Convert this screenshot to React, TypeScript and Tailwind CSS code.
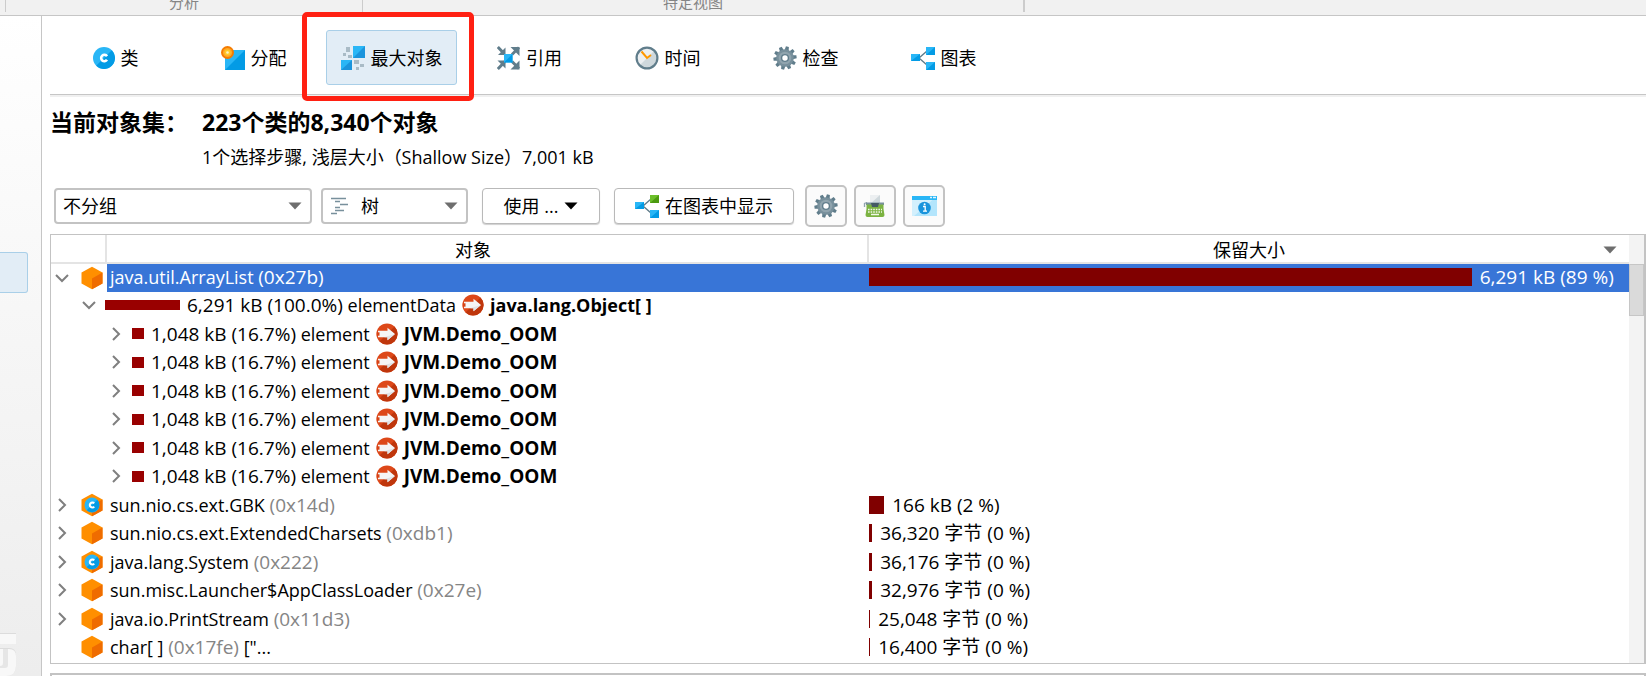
import type { ReactNode } from 'react';

type IconProps = { className?: string };

const ClassIcon = ({ className = 'size-[22px]' }: IconProps) => (
  <svg viewBox="0 0 22 22" className={className} aria-hidden="true">
    <circle cx="11" cy="11" r="11" fill="#29b6f6" />
    <path d="M18.8 3.2A11 11 0 0 1 3.2 18.8Z" fill="#039be5" />
    <path d="M14 9.2A3.2 3.2 0 1 0 14 12.8" fill="none" stroke="#fff" strokeWidth="2.6" />
  </svg>
);

const AllocationIcon = () => (
  <svg viewBox="0 0 24 24" className="size-6" aria-hidden="true">
    <path d="M4 4H24V24H4Z" fill="#29b6f6" />
    <path d="M24 4V24H4Z" fill="#039be5" />
    <circle cx="6.5" cy="6.5" r="6.5" fill="#f57c00" />
    <circle cx="6.5" cy="6.5" r="4.6" fill="#ffa726" />
    <circle cx="6.5" cy="6.5" r="3" fill="#ffca28" />
    <circle cx="6.5" cy="6.5" r="1.3" fill="#fff3c4" />
  </svg>
);

const BiggestIcon = () => (
  <svg viewBox="0 0 24 24" className="size-6" aria-hidden="true">
    <path d="M12 0H24V12H12Z" fill="#29b6f6" />
    <path d="M24 0V12H12Z" fill="#1a94dc" />
    <path d="M0 14H11V24H0Z" fill="#29b6f6" />
    <path d="M11 14V24H0Z" fill="#1a94dc" />
    <g fill="#a9bbc6">
      <path d="M5 1H9V6H5Z" />
      <path d="M2 7H5V10H2Z" />
      <path d="M7 9H11V12H7Z" />
      <path d="M13 14H18V18H13Z" />
      <path d="M19 18H23V21H19Z" />
      <path d="M15 21H18V24H15Z" />
    </g>
  </svg>
);

const ReferenceIcon = () => (
  <svg viewBox="0 0 23 24" className="h-6 w-[23px]" aria-hidden="true">
    <g stroke="#607d8b" strokeWidth="3" fill="none">
      <path d="M.8 1 7 7.500M22 22.500 15 15.500M.8 23 8 15.500M15 8.500 22 1.500" />
    </g>
    <g fill="#607d8b">
      <path d="M8.500 1.500V9H1Z" />
      <path d="M13.500 1H22.500V10Z" />
      <path d="M.5 14.500H8.500V22.500Z" />
      <path d="M22.500 14.500V23.500H13.500Z" />
    </g>
    <path d="M7 8H15.500V16.500H7Z" fill="#29b6f6" />
    <path d="M15.500 8V16.500H7Z" fill="#039be5" />
  </svg>
);

const ClockIcon = () => (
  <svg viewBox="0 0 24 24" className="size-6" aria-hidden="true">
    <circle cx="12" cy="12" r="10.600" fill="#cfd8dc" />
    <path d="M19.500 4.500A10.600 10.600 0 0 0 4.500 19.500Z" fill="#eceff1" />
    <circle cx="12" cy="12" r="10.400" fill="none" stroke="#607d8b" strokeWidth="2.200" />
    <path d="M6.500 5.500 12 12 16 9" fill="none" stroke="#ff9800" strokeWidth="2" />
  </svg>
);

const GearIcon = () => (
  <svg viewBox="-12 -12 24 24" className="size-6" aria-hidden="true">
    <g fill="#607d8b">
      {[0, 36, 72, 108, 144, 180, 216, 252, 288, 324].map((a) => (
        <path key={a} d="M-2.100 -7.500-1.500 -11.600H1.500L2.100 -7.500Z" transform={`rotate(${a + 12})`} />
      ))}
    </g>
    <circle r="8.800" fill="#78909c" />
    <circle r="6.300" fill="#90a4ae" />
    <circle r="3.400" fill="#fff" stroke="#607d8b" strokeWidth="1.400" />
  </svg>
);

const GraphIcon = ({ green = false }: { green?: boolean }) => (
  <svg viewBox="0 0 24 24" className="size-6" aria-hidden="true">
    <path d="M16 5 8 12 16 19" fill="none" stroke="#607d8b" strokeWidth="1.400" />
    <path d="M0 8H9V15H0ZM15 16H24V24H15Z" fill="#29b6f6" />
    <path d="M9 8V15H0ZM24 16V24H15Z" fill="#039be5" />
    <path d="M15 1H24V9H15Z" fill={green ? '#6cbf2a' : '#29b6f6'} />
    <path d="M24 1V9H15Z" fill={green ? '#4c9a10' : '#039be5'} />
  </svg>
);

const TypewriterIcon = () => (
  <svg viewBox="0 0 24 24" className="size-6" aria-hidden="true">
    <path d="M7 1H17V10H7Z" fill="#eceff1" />
    <path d="M17 1V10H7Z" fill="#cfd8dc" />
    <path d="M1.500 13V9.500L4 8.500" fill="none" stroke="#90a4ae" strokeWidth="1.300" />
    <path d="M3 8.500H21V11H3Z" fill="#78909c" />
    <path d="M3.500 10.500H20.500V15L21.500 21Q21.500 23 19.500 23H4.500Q2.500 23 2.500 21L3.500 15Z" fill="#7cb342" />
    <path d="M8 9H16L15 13H9Z" fill="#455a64" />
    <path d="M5 15.500H19M5 18H19" stroke="#f1f8e9" strokeWidth="1.500" strokeDasharray="1.600 1" />
    <path d="M8 20.500H16" stroke="#f1f8e9" strokeWidth="1.500" />
  </svg>
);

const InfoWindowIcon = () => (
  <svg viewBox="0 0 25 22" className="h-[22px] w-[25px]" aria-hidden="true">
    <path d="M0 1H25V21H0Z" fill="#b3e5fc" />
    <path d="M0 1H25L2 21H0Z" fill="#d3f0fd" />
    <path d="M0 1H25V5H0Z" fill="#29b6f6" />
    <path d="M18 2.500H20M21 2.500H24" stroke="#e1f5fe" strokeWidth="1.500" />
    <circle cx="12.500" cy="13" r="6.300" fill="#1a94dc" />
    <path d="M11 11.500H13.200V16M11 16.200H15" fill="none" stroke="#fff" strokeWidth="1.300" />
    <circle cx="12.600" cy="9.300" r="1" fill="#fff" />
  </svg>
);

const TreeListIcon = () => (
  <svg viewBox="0 0 18 18" className="size-[18px]" aria-hidden="true">
    <path d="M0 1.500H15M4 4.500H9M9 7.500H17M4 10.500H9M4 13.500H13M0 16.500H6" stroke="#78909c" strokeWidth="1.400" />
  </svg>
);

const CubeIcon = ({ withClass = false }: { withClass?: boolean }) => (
  <svg viewBox="0 0 22 24" className="h-6 w-[22px] shrink-0" aria-hidden="true">
    <path d="M11 .8 21.500 6.500V17.500L11 23.200.500 17.500V6.500Z" fill="#ff8f00" />
    <path d="M21.500 6.500V17.500L11 23.200V12.500Z" fill="#ef6c00" />
    {withClass && (
      <>
        <circle cx="11" cy="12" r="7.500" fill="#29b6f6" />
        <path d="M16.300 6.700A7.500 7.500 0 0 1 5.700 17.300Z" fill="#039be5" />
        <path d="M13.200 10.400A2.500 2.500 0 1 0 13.200 13.600" fill="none" stroke="#fff" strokeWidth="2" />
      </>
    )}
  </svg>
);

const ArrowIcon = () => (
  <svg viewBox="0 0 22 22" className="size-[22px] shrink-0" aria-hidden="true">
    <circle cx="11" cy="11" r="10.600" fill="#dd4819" />
    <path d="M18.500 3.500A10.600 10.600 0 0 1 3.500 18.500Z" fill="#bf360c" />
    <path d="M2 7.800H11.500V4.800L19 11 11.500 17.200V14.200H2Z" fill="#f5f5f5" />
    <path d="M19 11 11.500 17.200V14.200H8Z" fill="#dfe3e6" />
    <path d="M.8 9.300H3.500V12.700H.8Z" fill="#d84315" />
  </svg>
);

const Chevron = ({ open = false }: { open?: boolean }) => (
  <svg viewBox="0 0 14 14" className="size-[14px] shrink-0" fill="none" stroke="#7f7f7f" strokeWidth="2" aria-hidden="true">
    {open ? <path d="M1 4 7 10 13 4" /> : <path d="M4 1 10 7 4 13" />}
  </svg>
);

const Triangle = ({ className = 'text-[#6e6e6e]' }: IconProps) => (
  <svg viewBox="0 0 14 8" className={`h-2 w-[14px] ${className}`} aria-hidden="true">
    <path d="M.5 .5H13.500L7 7.500Z" fill="currentColor" />
  </svg>
);

const tabs: { label: string; icon: ReactNode; active?: boolean }[] = [
  { label: '类', icon: <ClassIcon /> },
  { label: '分配', icon: <AllocationIcon /> },
  { label: '最大对象', icon: <BiggestIcon />, active: true },
  { label: '引用', icon: <ReferenceIcon /> },
  { label: '时间', icon: <ClockIcon /> },
  { label: '检查', icon: <GearIcon /> },
  { label: '图表', icon: <GraphIcon /> },
];

const objects = [
  { name: 'sun.nio.cs.ext.GBK', id: '(0x14d)', cls: true, size: '166 kB (2 %)', bar: 15 },
  { name: 'sun.nio.cs.ext.ExtendedCharsets', id: '(0xdb1)', size: '36,320 字节 (0 %)', bar: 3 },
  { name: 'java.lang.System', id: '(0x222)', cls: true, size: '36,176 字节 (0 %)', bar: 3 },
  { name: 'sun.misc.Launcher$AppClassLoader', id: '(0x27e)', size: '32,976 字节 (0 %)', bar: 3 },
  { name: 'java.io.PrintStream', id: '(0x11d3)', size: '25,048 字节 (0 %)', bar: 1 },
  { name: 'char[ ]', id: '(0x17fe)', tail: '["...', leaf: true, size: '16,400 字节 (0 %)', bar: 1 },
];

const rowClass = 'odd:h-7 even:h-[29px]';
const cellClass = 'p-0 pb-[3px]';
const buttonClass = 'flex items-center rounded-[4px] border border-[#b9b9b9] bg-white shadow-[0_1px_1px_#d0d0d0]';
const iconButtonClass = 'flex size-[42px] items-center justify-center rounded-[5px] border-2 border-[#c3c3c3] bg-[#fbfbfb]';

function ReferenceText({ size, field, children }: { size: string; field: string; children: ReactNode }) {
  return (
    <>
      <span className="ml-[7px]">
        <span className="text-[19px]">{size}</span> {field}
      </span>
      <span className="mx-[6px]">
        <ArrowIcon />
      </span>
      {children}
    </>
  );
}

export default function App() {
  return (
    <div className="flex h-screen flex-col overflow-hidden bg-white font-['Open_Sans','Noto_Sans_CJK_SC',sans-serif] text-[18px] leading-6 text-black">
      <header className="flex h-4 shrink-0 border-b border-[#c6c6c6] bg-[#f1f1f1] text-[15px] leading-5 text-[#858585]">
        <div className="ml-[5px] flex h-3 w-[357px] justify-center border-l border-[#cccccc]">
          <span className="-mt-2">分析</span>
        </div>
        <div className="flex h-3 w-[663px] justify-center border-r-2 border-l border-[#cccccc]">
          <span className="-mt-2">特定视图</span>
        </div>
      </header>

      <div className="flex min-h-0 flex-1">
        <aside className="flex w-[42px] shrink-0 flex-col justify-between border-r border-[#c6c6c6] bg-linear-to-b from-white to-[#ededed]">
          <button aria-label="视图" className="mt-[236px] h-[41px] w-7 rounded-r-[3px] border border-l-0 border-[#a9cfe8] bg-[#e2edf6]" />
          <svg viewBox="0 0 16 43" className="h-[43px] w-4" aria-hidden="true">
            <path d="M0 0H16V11H0ZM0 15H9Q16 15 16 22V33Q16 43 6 43H0Z" fill="#dcdcdc" />
            <path d="M0 1H16V11H0ZM0 16H9Q16 16 16 23V33Q16 43 6 43H0Z" fill="#f8f8f8" />
            <path d="M3 16H8V32Q8 35 5 35H0V33Q3 33 3 30Z" fill="#e6e6e6" />
          </svg>
        </aside>

        <main className="flex min-w-0 flex-1 flex-col pl-2">
          <nav className="flex gap-[7px] border-b border-[#c6c6c6] pt-[14px] pb-[9px] shadow-[0_2px_0_#f0f0f0]">
            {tabs.map((t) => (
              <div key={t.label} className="relative">
                <button
                  className={`flex h-[55px] w-[131px] items-center justify-center gap-[6px] rounded-[3px] border ${
                    t.active ? 'border-[#a9cfe8] bg-[#e2edf6]' : 'border-transparent'
                  }`}
                >
                  {t.icon}
                  {t.label}
                </button>
                {t.active && (
                  <div className="pointer-events-none absolute -top-[18px] -right-[17px] -bottom-4 -left-6 rounded-[5px] border-[5px] border-[#ff2012]" />
                )}
              </div>
            ))}
          </nav>

          <section className="grid grid-cols-[152px_1fr] pt-[11px]">
            <h1 className="text-[23px] leading-8 font-bold whitespace-nowrap">当前对象集：</h1>
            <p className="text-[23px] leading-8 font-bold">223个类的8,340个对象</p>
            <p className="col-start-2 leading-[38px]">1个选择步骤, 浅层大小（Shallow Size）7,001 kB</p>
          </section>

          <div className="mt-[9px] flex items-center pl-1">
            <label className="relative flex items-center">
              <select aria-label="分组" className="h-9 w-[258px] appearance-none rounded-[4px] border-2 border-[#c3c3c3] bg-white pl-[7px]">
                <option>不分组</option>
              </select>
              <span className="pointer-events-none absolute right-[10px]">
                <Triangle />
              </span>
            </label>
            <label className="relative ml-[9px] flex items-center">
              <select aria-label="视图模式" className="h-9 w-[147px] appearance-none rounded-[4px] border-2 border-[#c3c3c3] bg-white pl-[38px]">
                <option>树</option>
              </select>
              <span className="pointer-events-none absolute left-[10px]">
                <TreeListIcon />
              </span>
              <span className="pointer-events-none absolute right-[10px]">
                <Triangle />
              </span>
            </label>
            <button className={`${buttonClass} ml-[14px] h-9 w-[118px] justify-center gap-[6px]`}>
              使用 ...
              <Triangle className="text-black" />
            </button>
            <button className={`${buttonClass} ml-[14px] h-9 w-[180px] justify-center gap-[6px]`}>
              <GraphIcon green />
              在图表中显示
            </button>
            <div className="ml-[11px] flex gap-[7px]">
              <button aria-label="设置" className={iconButtonClass}>
                <GearIcon />
              </button>
              <button aria-label="脚本" className={iconButtonClass}>
                <TypewriterIcon />
              </button>
              <button aria-label="信息" className={iconButtonClass}>
                <InfoWindowIcon />
              </button>
            </div>
          </div>

          <div className="mt-[7px] flex shrink-0 border border-r-2 border-[#c3c3c3]">
            <div className="min-w-0 flex-1">
              <table className="w-full table-fixed border-separate border-spacing-0 whitespace-nowrap">
                <colgroup>
                  <col className="w-[56px]" />
                  <col className="w-[48.3%]" />
                  <col />
                </colgroup>
                <thead>
                  <tr className="h-[29px]">
                    <th className="border-r-2 border-b-2 border-[#e4e4e4] p-0" aria-label="展开" />
                    <th className="border-r-2 border-b-2 border-[#e4e4e4] p-0 pt-[2px] pr-7 font-normal">对象</th>
                    <th className="border-b-2 border-[#e4e4e4] p-0 pt-[2px] font-normal">
                      <div className="relative flex items-center justify-center">
                        保留大小
                        <span className="absolute right-3">
                          <Triangle />
                        </span>
                      </div>
                    </th>
                  </tr>
                </thead>
                <tbody>
                  <tr className={`${rowClass} text-white`}>
                    <td colSpan={2} className="p-0">
                      <div className="flex h-7 items-center pl-1">
                        <Chevron open />
                        <span className="mr-[4px] ml-[12px]">
                          <CubeIcon />
                        </span>
                        <span className="h-7 flex-1 bg-[#3875d7] pl-[3px] leading-[26px]">
                          java.util.ArrayList <span className="text-[19px]">(0x27b)</span>
                        </span>
                      </div>
                    </td>
                    <td className={`${cellClass} bg-[#3875d7]`}>
                      <div className="flex items-center gap-2 text-[19px]">
                        <span className="h-[18px] bg-[#800000]" style={{ width: '79.3%' }} />
                        6,291 kB (89 %)
                      </div>
                    </td>
                  </tr>
                  <tr className={rowClass}>
                    <td colSpan={2} className={cellClass}>
                      <div className="flex items-center pl-[31px]">
                        <Chevron open />
                        <span className="ml-[9px] h-[10px] w-[75px] bg-[#990000]" />
                        <ReferenceText size="6,291 kB (100.0%)" field="elementData">
                          <b>java.lang.Object[ ]</b>
                        </ReferenceText>
                      </div>
                    </td>
                    <td />
                  </tr>
                  {[0, 1, 2, 3, 4, 5].map((i) => (
                    <tr key={i} className={rowClass}>
                      <td colSpan={2} className={cellClass}>
                        <div className="flex items-center pl-[58px]">
                          <Chevron />
                          <span className="ml-[9px] h-[11px] w-3 bg-[#990000]" />
                          <ReferenceText size="1,048 kB (16.7%)" field="element">
                            <b className="text-[19px]">JVM.Demo_OOM</b>
                          </ReferenceText>
                        </div>
                      </td>
                      <td />
                    </tr>
                  ))}
                  {objects.map((o) => (
                    <tr key={o.name} className={rowClass}>
                      <td colSpan={2} className={cellClass}>
                        <div className="flex items-center pl-1">
                          {o.leaf ? <span className="w-[14px]" /> : <Chevron />}
                          <span className="mr-[7px] ml-[12px]">
                            <CubeIcon withClass={o.cls} />
                          </span>
                          <span>
                            {o.name} <span className="text-[19px] text-[#858585]">{o.id}</span> {o.tail}
                          </span>
                        </div>
                      </td>
                      <td className={cellClass}>
                        <div className="flex items-center gap-2 text-[19px]">
                          <span className="h-[18px] bg-[#800000]" style={{ width: o.bar }} />
                          <span>{o.size}</span>
                        </div>
                      </td>
                    </tr>
                  ))}
                </tbody>
              </table>
            </div>
            <div className="w-[15px] bg-[#f3f3f3] pt-[29px]">
              <div className="h-[52px] border border-[#c6c6c6] bg-[#dadada]" />
            </div>
          </div>

          <div className="mt-[9px] min-h-1 flex-1 border-2 border-b-0 border-[#c3c3c3]" />
        </main>
      </div>
    </div>
  );
}
